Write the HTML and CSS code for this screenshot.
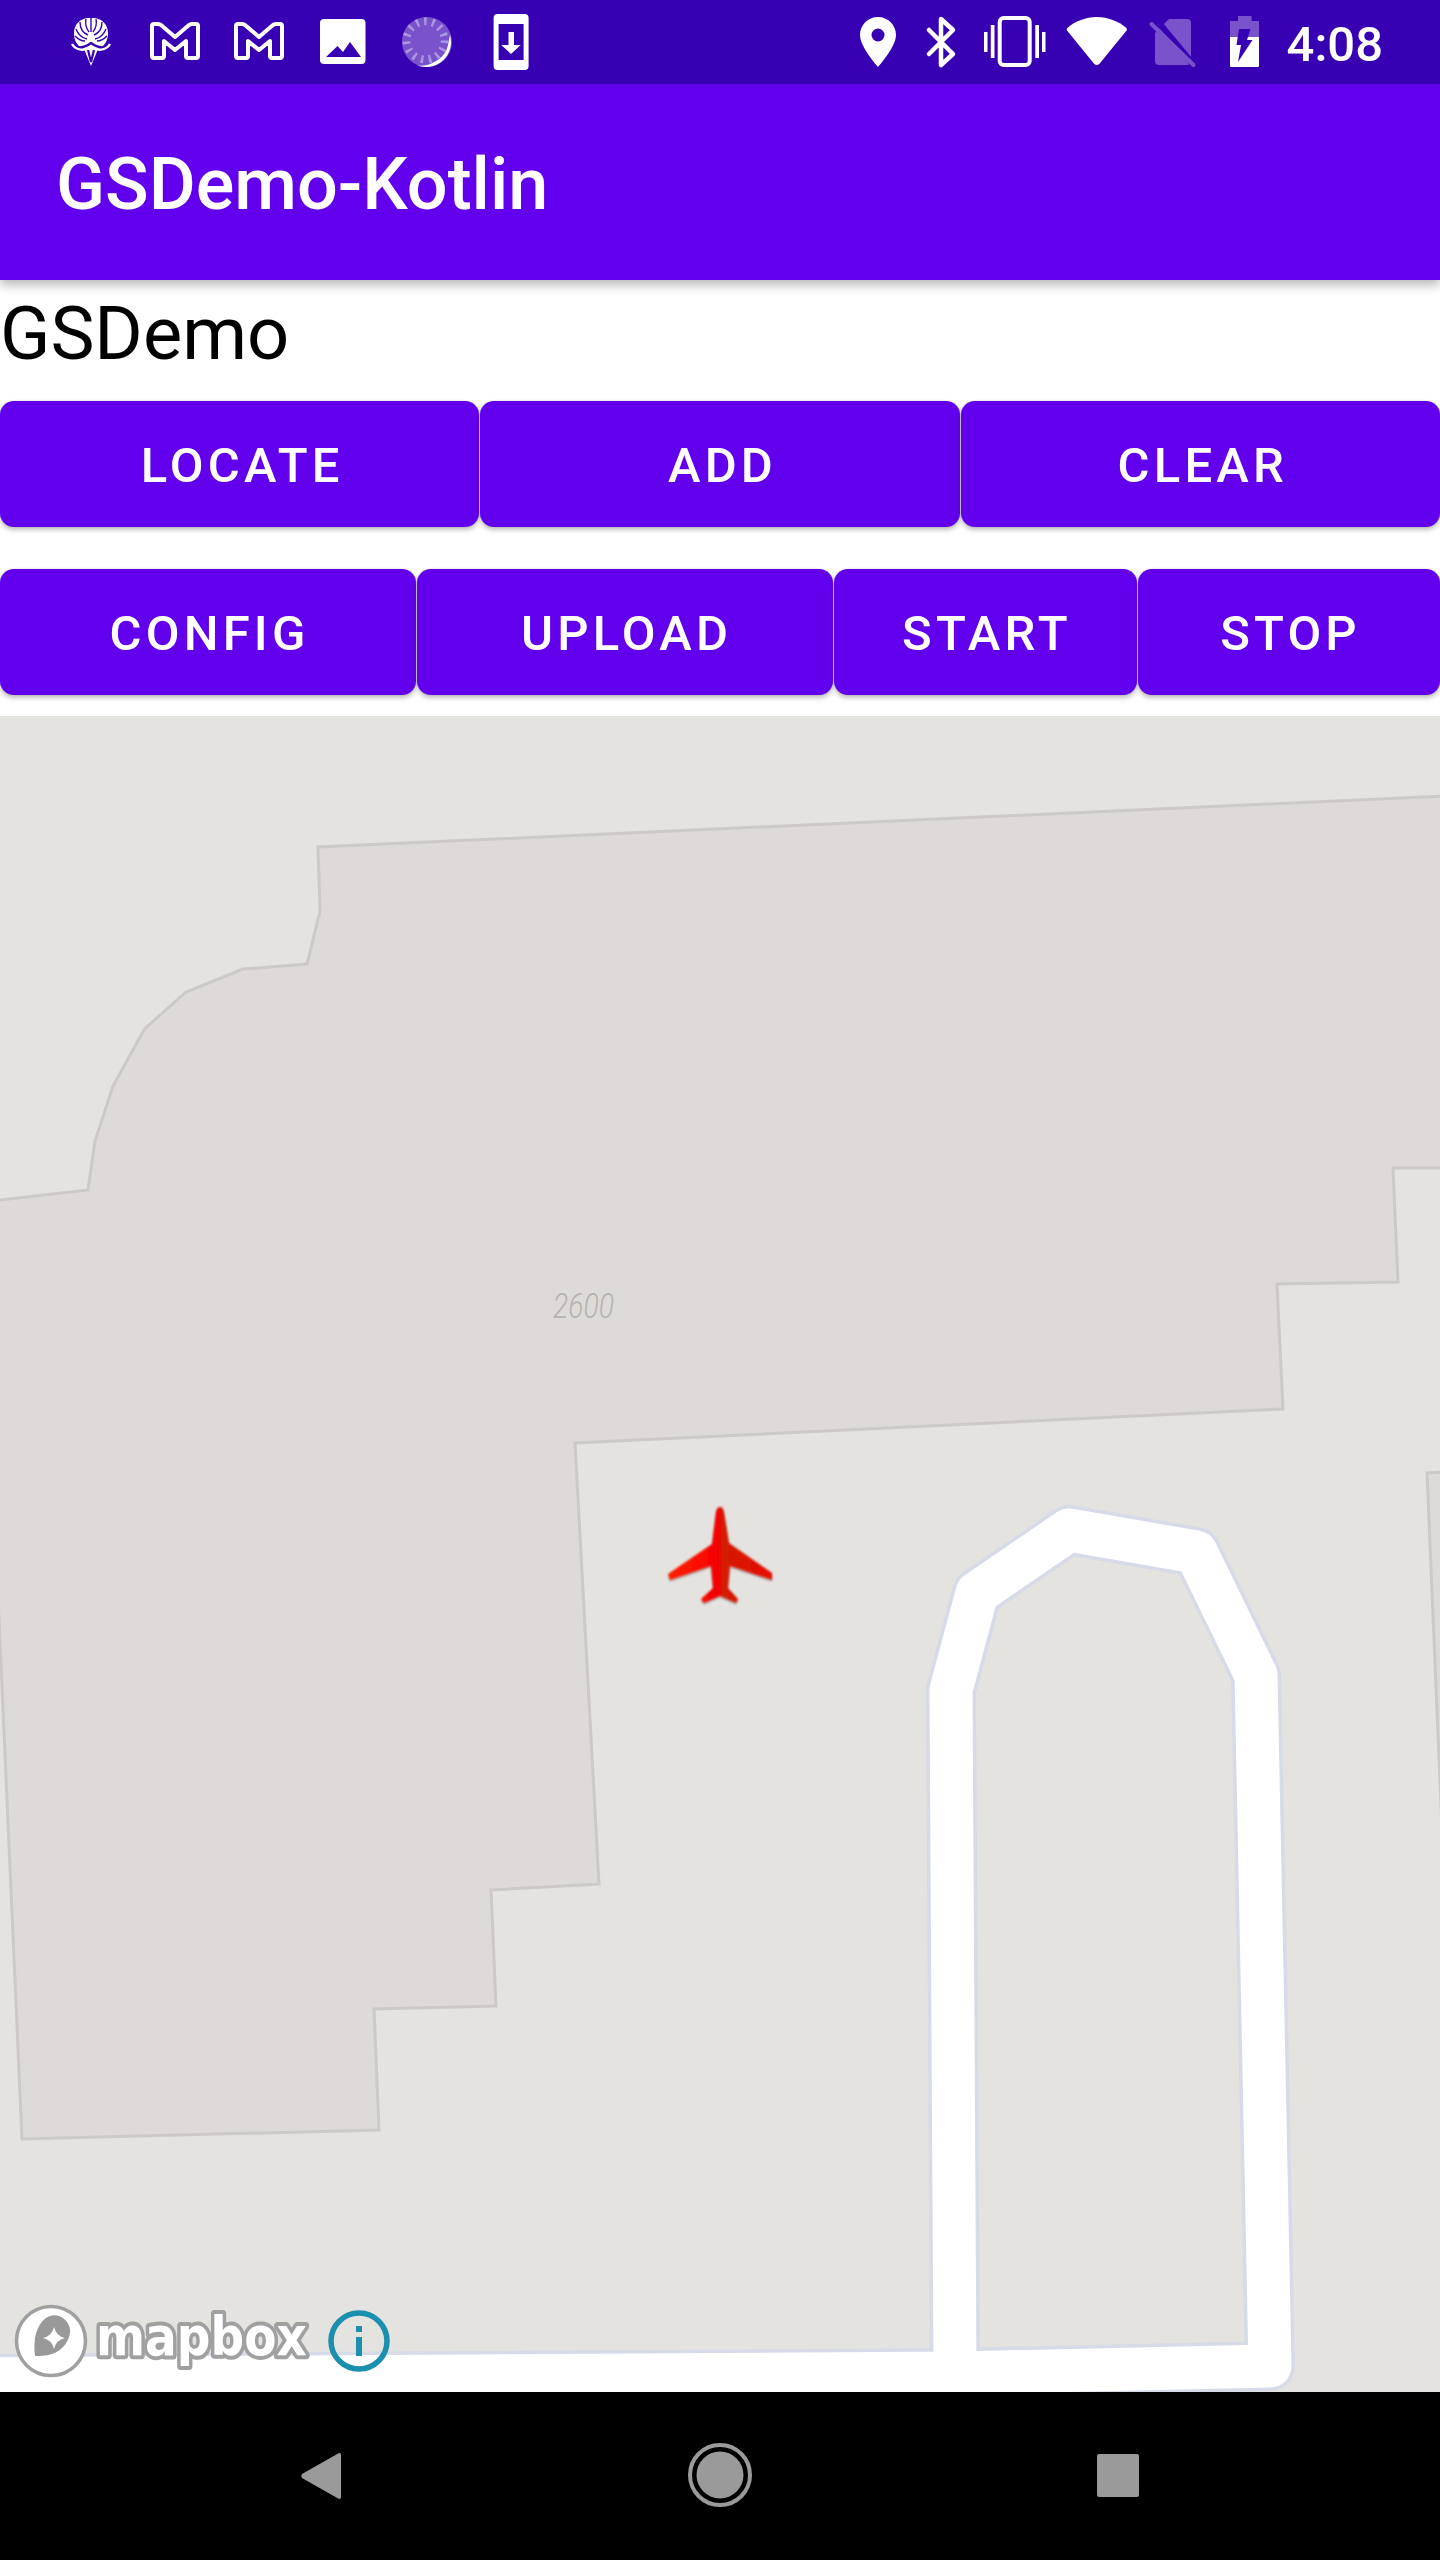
FILE: index.html
```html
<!DOCTYPE html>
<html lang="en">
<head>
  <meta charset="UTF-8" />
  <meta name="viewport" content="width=device-width, initial-scale=1.0"/>
  <title>GSDemo-Kotlin</title>
  <link rel="stylesheet" href="styles.css">
</head>
<body>
  <div class="status-bar">
    <div class="status-left">
      <!-- mask -->
      <svg class="cell" viewBox="49 0 84 84">
        <path fill="#fff" d="M91 18c10-1 17 6 17 15 0 6-2 10-5 13l-5 3-7 17-7-17-5-3c-3-3-5-7-5-13 0-9 7-16 17-15z"/>
        <g fill="none" stroke="#3700b3" stroke-width="1.4">
          <path d="M91 18v14M86 19c-1 5 0 9 3 13M96 19c1 5 0 9-3 13M80 22c0 6 3 11 8 13M102 22c0 6-3 11-8 13M76 29c2 5 6 9 11 10M106 29c-2 5-6 9-11 10M75 36c3 3 6 5 10 5M107 36c-3 3-6 5-10 5"/>
          <path stroke-width="2.2" d="M78 47c5 1 9-1 13-4 4 3 8 5 13 4M88 50l3 12M94 50l-3 12"/>
        </g>
        <path fill="none" stroke="#fff" stroke-width="2.4" d="M72 44c4 7 13 7 19 3 6 4 15 4 19-3"/>
      </svg>
      <!-- gmail -->
      <svg class="cell" viewBox="133 0 84 84">
        <path class="outline-m" d="M152 26q0-2 2-2h4q2 0 3 1l14 12 14-12q1-1 3-1h4q2 0 2 2v30q0 2-2 2h-8q-2 0-2-2V41l-11 9-11-9v15q0 2-2 2h-8q-2 0-2-2z"/>
      </svg>
      <svg class="cell" viewBox="217 0 84 84">
        <path class="outline-m" d="M236 26q0-2 2-2h4q2 0 3 1l14 12 14-12q1-1 3-1h4q2 0 2 2v30q0 2-2 2h-8q-2 0-2-2V41l-11 9-11-9v15q0 2-2 2h-8q-2 0-2-2z"/>
      </svg>
      <!-- picture -->
      <svg class="cell" viewBox="301 0 84 84">
        <rect x="320" y="19" width="45.500" height="45" rx="4" fill="#fff"/>
        <path fill="#3700b3" d="M326 57l11.500-11 5.500 6 7-10 11 15z"/>
      </svg>
      <!-- sync disc -->
      <svg class="cell" viewBox="385 0 84 84">
        <circle cx="427" cy="42" r="25" fill="#7a52cc"/>
        <path fill="#fff" d="M450 35a25 25 0 0 1-34 30c12 3 30-4 34-30z"/>
        <circle cx="425.500" cy="40.500" r="23" fill="#7a52cc"/>
        <circle cx="425.500" cy="40.500" r="19" fill="none" stroke="#ab97de" stroke-width="8" stroke-dasharray="2.500 5.460"/>
        <circle cx="425.500" cy="40.500" r="15" fill="#7a52cc"/>
      </svg>
      <!-- download -->
      <svg class="cell" viewBox="469 0 84 84">
        <rect x="493.600" y="14" width="35" height="56" rx="4" fill="#fff"/>
        <rect x="498.600" y="24" width="25" height="36" fill="#3700b3"/>
        <path fill="#fff" d="M508.500 32h5.500v13h6.700l-9.700 9-9.700-9h7.200z"/>
      </svg>
    </div>
    <div class="status-right">
      <!-- location -->
      <svg class="cell-loc" viewBox="850 0 62 84">
        <path fill="#fff" fill-rule="evenodd" d="M879 17c-10 0-18 8-18 18 0 12 18 32 18 32s18-20 18-32c0-10-8-18-18-18zm0 11.500a6.500 6.500 0 1 1 0 13 6.500 6.500 0 0 1 0-13z"/>
      </svg>
      <!-- bluetooth -->
      <svg class="cell-bt" viewBox="912 0 59 84">
        <path fill="none" stroke="#fff" stroke-width="4.500" stroke-linecap="round" stroke-linejoin="round" d="M930 30l24 24-12 11V19l12 11-24 24"/>
      </svg>
      <!-- vibrate -->
      <svg class="cell-vib" viewBox="971 0 86 84">
        <rect x="1000.700" y="18" width="30" height="47" rx="4" fill="none" stroke="#fff" stroke-width="4"/>
        <path fill="#fff" d="M985 32h3.500v20H985zM991.800 25h3.700v33h-3.700zM1036.300 25h3.700v33h-3.700zM1043 32h3.500v20H1043z"/>
      </svg>
      <!-- wifi -->
      <svg class="cell-wifi" viewBox="1057 0 82 84">
        <path fill="#fff" d="M1068.300 28c8-7 18.500-11 29.500-11s21.500 4 29.500 11q1 1 .3 2.500l-27.300 33.500q-2.500 1.800-5 0l-27.300-33.500q-.700-1.500.3-2.500z"/>
      </svg>
      <!-- no sim -->
      <svg class="cell-sim" viewBox="1139 0 74 84">
        <path fill="#7a52cc" d="M1170 19h18q4 0 4 4v38q0 4-4 4h-28q-4 0-4-4V33z"/>
        <path stroke="#3700b3" stroke-width="6" d="M1155 17l39 47"/>
        <path stroke="#7a52cc" stroke-width="4" stroke-linecap="round" d="M1152.500 24l42 41"/>
      </svg>
      <!-- battery charging -->
      <svg class="cell-bat" viewBox="1213 0 75 84">
        <path fill="#7a52cc" d="M1239 16h13.600v5h7.400v17h-29V21h8z"/>
        <path fill="#fff" d="M1231 37h29v29q0 1-1 1h-27q-1 0-1-1z"/>
        <path fill="#3700b3" d="M1240 29h11.500l-3.500 11h5.500l-14.500 22 3-17h-4.500z"/>
      </svg>
      <span class="clock">4:08</span>
    </div>
  </div>

  <div class="toolbar">GSDemo-Kotlin</div>

  <div class="page-title">GSDemo</div>

  <div class="btn-row row-three">
    <button class="btn">LOCATE</button>
    <button class="btn">ADD</button>
    <button class="btn">CLEAR</button>
  </div>
  <div class="btn-row row-four">
    <button class="btn">CONFIG</button>
    <button class="btn">UPLOAD</button>
    <button class="btn">START</button>
    <button class="btn">STOP</button>
  </div>

  <div class="map">
    <svg class="map-canvas" viewBox="0 716 1440 1676">
      <polygon class="building" points="-5,1200.500 88,1190 95,1141 113,1086 144.500,1029 186,992 243,969 307,964 320,911 318,847 1445,796 1445,1168 1393,1168 1398,1282 1277,1284 1283,1409 575,1443 599,1884 491,1890 496,2006 374,2009 379,2130 22,2139 7,1800 -5,1529"/>
      <polygon class="building" points="1445,1472 1427,1473 1445,1900 1445,1472"/>
      <polyline class="road-casing" points="-30,2379 955,2373 1270,2366 1256,1675 1196,1552 1069,1530 977,1593 951,1690 955,2373"/>
      <polyline class="road-fill" points="-30,2379 955,2373 1270,2366 1256,1675 1196,1552 1069,1530 977,1593 951,1690 955,2373"/>
      <text class="elevation" x="553" y="1318" textLength="61" lengthAdjust="spacingAndGlyphs">2600</text>
    </svg>

    <svg class="plane" viewBox="620 1460 180 180">
      <defs>
        <linearGradient id="planeRed" x1="0" x2="1" y1="0" y2="0">
          <stop offset="0" stop-color="#ff2200"/>
          <stop offset="0.48" stop-color="#f60000"/>
          <stop offset="0.52" stop-color="#d41c00"/>
          <stop offset="1" stop-color="#e80a00"/>
        </linearGradient>
        <filter id="planeSoft" x="-20%" y="-20%" width="140%" height="140%">
          <feGaussianBlur stdDeviation="1.100"/>
        </filter>
      </defs>
      <path class="plane-shadow" filter="url(#planeSoft)" transform="translate(0 2)" d="M720 1507q3 0 4 5l5 31 43 30v7l-42-14-2 22 10 11-2 4-16-7-16 7-3-4 12-11-2-22-41 14-2-6 44-30 4-32q1-5 4-5z"/>
      <path fill="url(#planeRed)" filter="url(#planeSoft)" d="M720 1507q3 0 4 5l5 31 43 30v7l-42-14-2 22 10 11-2 4-16-7-16 7-3-4 12-11-2-22-41 14-2-6 44-30 4-32q1-5 4-5z"/>
    </svg>

    <svg class="mapbox-logo" viewBox="0 2300 400 80">
      <circle cx="51" cy="2341" r="34.500" fill="#fff" stroke="#a0a0a0" stroke-width="3.500"/>
      <path fill="#999" d="M35 2356c-2-16 1-31 11-38 10-7 22 0 24 11 1 11-8 22-18 25-6 2-12 2-17 2z"/>
      <path fill="#fff" d="M54 2327q2 9 11 11-9 2-11 11-2-9-11-11 9-2 11-11z"/>
      <text class="mapbox-word" x="96" y="2355" textLength="211" lengthAdjust="spacingAndGlyphs">mapbox</text>
      <circle cx="359" cy="2341" r="28" fill="none" stroke="#1b8fae" stroke-width="5.500"/>
      <path fill="#1b8fae" d="M356 2326h6v6h-6zM356 2337h6v19h-6z"/>
    </svg>
  </div>

  <div class="nav-bar">
    <svg class="nav-cell" viewBox="279 2392 84 168">
      <path class="nav-icon" d="M339 2453q2-.500 2 2v42q0 2-2 2l-37-21q-1.500-2 0-4z"/>
    </svg>
    <svg class="nav-cell" viewBox="678 2392 84 168">
      <circle cx="720" cy="2475" r="30" fill="none" stroke="#9a9a9a" stroke-width="4"/>
      <circle cx="720" cy="2475" r="23.500" fill="#9a9a9a"/>
    </svg>
    <svg class="nav-cell" viewBox="1077 2392 84 168">
      <rect class="nav-icon" x="1097" y="2454" width="42" height="43" rx="2"/>
    </svg>
  </div>
</body>
</html>
```

FILE: styles.css
```css
* {
  box-sizing: border-box;
}
body {
  margin: 0;
  width: 1440px;
  height: 2560px;
  display: flex;
  flex-direction: column;
  background: #fff;
  font-family: Roboto, sans-serif;
  overflow: hidden;
}
.status-bar {
  height: 84px;
  display: flex;
  justify-content: space-between;
  background: #3700b3;
  color: #fff;
}
.status-left {
  display: flex;
  padding-left: 49px;
}
.status-right {
  display: flex;
  align-items: center;
  padding-right: 57px;
}
.status-bar svg {
  height: 84px;
  display: block;
}
.cell { width: 84px; }
.cell-loc { width: 62px; }
.cell-bt { width: 59px; }
.cell-vib { width: 86px; }
.cell-wifi { width: 82px; }
.cell-sim { width: 74px; }
.cell-bat { width: 75px; }
.outline-m {
  fill: none;
  stroke: #fff;
  stroke-width: 4;
  stroke-linejoin: round;
}
.clock {
  padding-top: 5px;
  font-size: 49px;
  font-weight: 500;
  line-height: 84px;
}
.toolbar {
  height: 196px;
  padding: 5px 0 0 56px;
  background: #6200ee;
  color: #fff;
  font-size: 72px;
  font-weight: 500;
  line-height: 191px;
  box-shadow: 0 5px 10px rgba(0, 0, 0, 0.28);
  position: relative;
  z-index: 1;
}
.page-title {
  height: 121px;
  padding-top: 11px;
  color: #000;
  font-size: 74px;
  line-height: 86px;
}
.btn-row {
  display: grid;
  gap: 1px;
  height: 126px;
}
.row-three {
  grid-template-columns: 1fr 1fr 1fr;
}
.row-four {
  grid-template-columns: 416px 416px 303px 1fr;
  margin-top: 42px;
}
.btn {
  border: none;
  border-radius: 14px;
  padding: 3px 0 0 5px;
  background: #6200ee;
  color: #fff;
  font-family: Roboto, sans-serif;
  font-size: 49px;
  font-weight: 500;
  letter-spacing: 4.2px;
  box-shadow: 0 3px 5px rgba(0, 0, 0, 0.25), 0 0 2px rgba(0, 0, 0, 0.15);
}
.row-four .btn {
  padding-left: 3px;
}
.map {
  margin-top: 21px;
  height: 1676px;
  position: relative;
  background: #e4e3df;
  overflow: hidden;
}
.map-canvas {
  display: block;
  width: 1440px;
  height: 1676px;
}
.building {
  fill: #dddad7;
  stroke: #cdcac6;
  stroke-width: 3;
}
.road-casing,
.road-fill {
  fill: none;
  stroke-linejoin: round;
}
.road-casing {
  stroke: #d7dbe8;
  stroke-width: 50;
}
.road-fill {
  stroke: #fff;
  stroke-width: 43;
}
.elevation {
  fill: #b5b3af;
  font-family: Roboto, sans-serif;
  font-size: 35px;
  font-style: italic;
  font-weight: 300;
}
.plane {
  position: absolute;
  left: 620px;
  top: 744px;
  width: 180px;
  height: 180px;
}
.plane-shadow {
  fill: #8a8a8a;
  opacity: 0.5;
}
.mapbox-logo {
  position: absolute;
  left: 0;
  bottom: 12px;
  width: 400px;
  height: 80px;
}
.mapbox-word {
  fill: #fff;
  stroke: #a0a0a0;
  stroke-width: 8;
  stroke-linejoin: round;
  paint-order: stroke;
  font-family: "DejaVu Sans", sans-serif;
  font-size: 54px;
  font-weight: bold;
}
.nav-bar {
  height: 168px;
  display: flex;
  justify-content: center;
  gap: 315px;
  background: #000;
}
.nav-cell {
  display: block;
  width: 84px;
  height: 168px;
}
.nav-icon {
  fill: #9a9a9a;
}
```
